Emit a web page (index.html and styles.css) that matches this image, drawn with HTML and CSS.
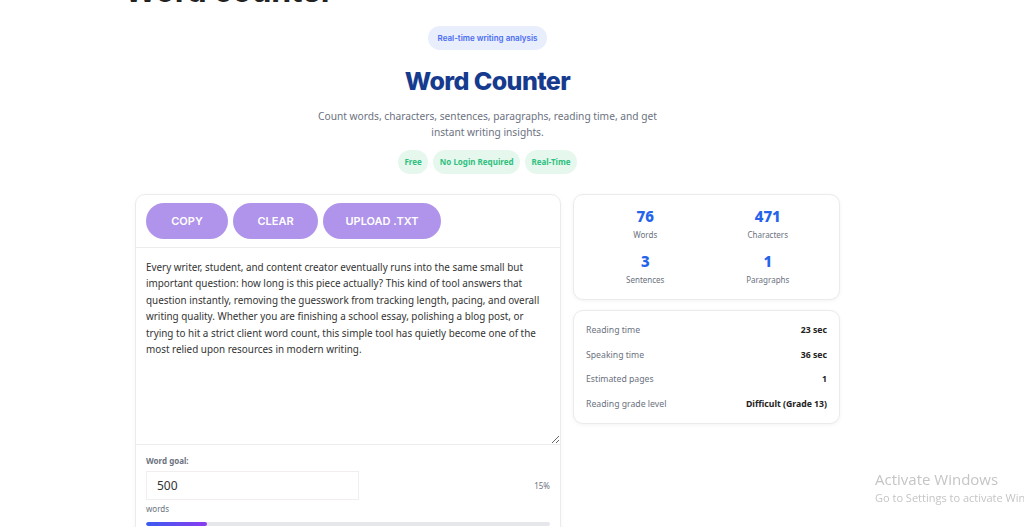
FILE: index.html
```html
<!DOCTYPE html>
<html>
<head>
    <meta charset="UTF-8">
    <title>Word Counter</title>
    <link rel="stylesheet" href="styles.css">
</head>
<body>
    <div class="page">
        <h1 class="page-title">Word counter</h1>

        <div class="wrap">
            <header class="hero">
                <span class="badge">Real-time writing analysis</span>
                <h2>Word Counter</h2>
                <p class="lead">Count words, characters, sentences, paragraphs, reading time, and get instant writing insights.</p>
                <div class="tags">
                    <span class="tag">Free</span>
                    <span class="tag">No Login Required</span>
                    <span class="tag">Real-Time</span>
                </div>
            </header>

            <div class="tool">
                <div class="editor">
                    <div class="toolbar">
                        <button class="btn">COPY</button>
                        <button class="btn">CLEAR</button>
                        <button class="btn">UPLOAD .TXT</button>
                    </div>
                    <textarea class="text" spellcheck="false">Every writer, student, and content creator eventually runs into the same small but important question: how long is this piece actually? This kind of tool answers that question instantly, removing the guesswork from tracking length, pacing, and overall writing quality. Whether you are finishing a school essay, polishing a blog post, or trying to hit a strict client word count, this simple tool has quietly become one of the most relied upon resources in modern writing.</textarea>
                    <div class="goal">
                        <div class="goal-row">
                            <div class="goal-input">
                                <label for="goal">Word goal:</label>
                                <input type="text" id="goal" value="500">
                                <span class="unit">words</span>
                            </div>
                            <span class="goal-pct">15%</span>
                        </div>
                        <div class="bar"><div class="bar-fill" style="width: 15%;"></div></div>
                    </div>
                </div>

                <div class="side">
                    <div class="card stats">
                        <div class="stat"><strong>76</strong><span>Words</span></div>
                        <div class="stat"><strong>471</strong><span>Characters</span></div>
                        <div class="stat"><strong>3</strong><span>Sentences</span></div>
                        <div class="stat"><strong>1</strong><span>Paragraphs</span></div>
                    </div>
                    <div class="card details">
                        <div class="row"><span>Reading time</span><b>23 sec</b></div>
                        <div class="row"><span>Speaking time</span><b>36 sec</b></div>
                        <div class="row"><span>Estimated pages</span><b>1</b></div>
                        <div class="row"><span>Reading grade level</span><b>Difficult (Grade 13)</b></div>
                    </div>
                </div>
            </div>
        </div>
    </div>

    <div class="watermark">
        <div class="wm-title">Activate Windows</div>
        <div class="wm-sub">Go to Settings to activate Windows.</div>
    </div>
</body>
</html>
```

FILE: styles.css
```css
html, body {
    margin: 0;
    padding: 0;
    overflow: hidden;
}
body {
    font-family: "Noto Sans", "Open Sans", sans-serif;
    background-color: #fff;
    color: #333;
    height: 527px;
}
.page {
    width: 975px;
}
/* page heading, scrolled mostly out of view */
.page-title {
    font-family: Inter, sans-serif;
    font-size: 32px;
    font-weight: 700;
    color: #222;
    line-height: 32px;
    margin: -25px 0 0 124px;
    letter-spacing: -0.3px;
}
.wrap {
    max-width: 705px;
    margin: 0 auto;
}
.hero {
    text-align: center;
    margin-top: 17px;
}
.badge {
    display: inline-block;
    background-color: #e8eefc;
    color: #4a6cf0;
    font-family: Inter, sans-serif;
    font-size: 8px;
    font-weight: 600;
    line-height: 24px;
    padding: 0 10px;
    border-radius: 12px;
}
.hero h2 {
    font-family: Inter, sans-serif;
    font-size: 25px;
    font-weight: 800;
    letter-spacing: -0.6px;
    color: #163b8e;
    margin: 16px 0 0;
    line-height: 30px;
}
.lead {
    max-width: 350px;
    margin: 12px auto 0;
    font-size: 10.2px;
    line-height: 16px;
    color: #6b7280;
}
.tags {
    display: flex;
    justify-content: center;
    gap: 5px;
    margin-top: 10px;
}
.tag {
    background-color: #e6f8ee;
    color: #2fbf7f;
    font-size: 8px;
    font-weight: 700;
    line-height: 24px;
    padding: 0 6.5px;
    border-radius: 12px;
}
.tool {
    display: flex;
    gap: 12px;
    margin-top: 20px;
    align-items: flex-start;
}
.editor {
    width: 426px;
    border: 1px solid #ebebee;
    border-radius: 10px;
    box-sizing: border-box;
    box-shadow: 0 1px 4px rgba(0, 0, 0, 0.04);
}
.toolbar {
    display: flex;
    gap: 5px;
    padding: 8px 10px;
    border-bottom: 1px solid #ececef;
}
.btn {
    height: 36px;
    border: none;
    border-radius: 18px;
    background-color: #b093ea;
    color: #fff;
    font-family: Inter, sans-serif;
    font-size: 11px;
    font-weight: 600;
    cursor: pointer;
}
.btn:nth-child(1) { width: 82px; }
.btn:nth-child(2) { width: 85px; }
.btn:nth-child(3) { width: 118px; }
.text {
    display: block;
    width: 100%;
    height: 197px;
    box-sizing: border-box;
    border: none;
    border-bottom: 1px solid #ececef;
    padding: 11px 10px;
    font-family: "Noto Sans", sans-serif;
    font-size: 9.9px;
    line-height: 16.4px;
    color: #333;
    outline: none;
    resize: vertical;
}
.goal {
    padding: 10px 10px 20px;
}
.goal-row {
    display: flex;
    justify-content: space-between;
    align-items: center;
}
.goal-input {
    display: flex;
    flex-direction: column;
}
.goal-input label {
    font-size: 8px;
    font-weight: 700;
    color: #6b7280;
    line-height: 12px;
}
.goal-input input {
    width: 213px;
    height: 29px;
    box-sizing: border-box;
    margin-top: 4px;
    border: 1px solid #f2eef0;
    padding: 0 10px;
    font-family: "Noto Sans", sans-serif;
    font-size: 12px;
    color: #333;
    outline: none;
}
.unit {
    font-size: 8px;
    color: #6b7280;
    line-height: 12px;
    margin-top: 3px;
}
.goal-pct {
    font-size: 8px;
    color: #6b7280;
}
.bar {
    height: 4px;
    background-color: #e5e7eb;
    border-radius: 2px;
    margin-top: 7px;
    overflow: hidden;
}
.bar-fill {
    height: 100%;
    border-radius: 2px;
    background: linear-gradient(90deg, #3b5bf0, #8a3bf0);
}
.side {
    width: 267px;
    display: flex;
    flex-direction: column;
    gap: 10px;
}
.card {
    border: 1px solid #ebebee;
    border-radius: 10px;
    box-shadow: 0 1px 4px rgba(0, 0, 0, 0.05);
    background-color: #fff;
}
.stats {
    display: grid;
    grid-template-columns: 1fr 1fr;
    padding: 11px 10px 13px;
    row-gap: 10px;
}
.stat {
    display: flex;
    flex-direction: column;
    align-items: center;
}
.stat strong {
    font-size: 15px;
    font-weight: 800;
    color: #2563eb;
    line-height: 20px;
}
.stat span {
    font-size: 8px;
    color: #6b7280;
    line-height: 12px;
    margin-top: 3px;
}
.details {
    padding: 7px 12px;
}
.row {
    display: flex;
    justify-content: space-between;
    align-items: center;
    height: 24.5px;
    font-size: 8.7px;
}
.row span {
    color: #6b7280;
}
.row b {
    color: #222;
    font-weight: 700;
}
.watermark {
    position: fixed;
    left: 875px;
    top: 469px;
    white-space: nowrap;
    font-family: "Open Sans", sans-serif;
    color: #c5c5c5;
}
.wm-title {
    font-size: 15px;
    line-height: 20px;
}
.wm-sub {
    font-size: 11px;
    line-height: 18px;
}
```
